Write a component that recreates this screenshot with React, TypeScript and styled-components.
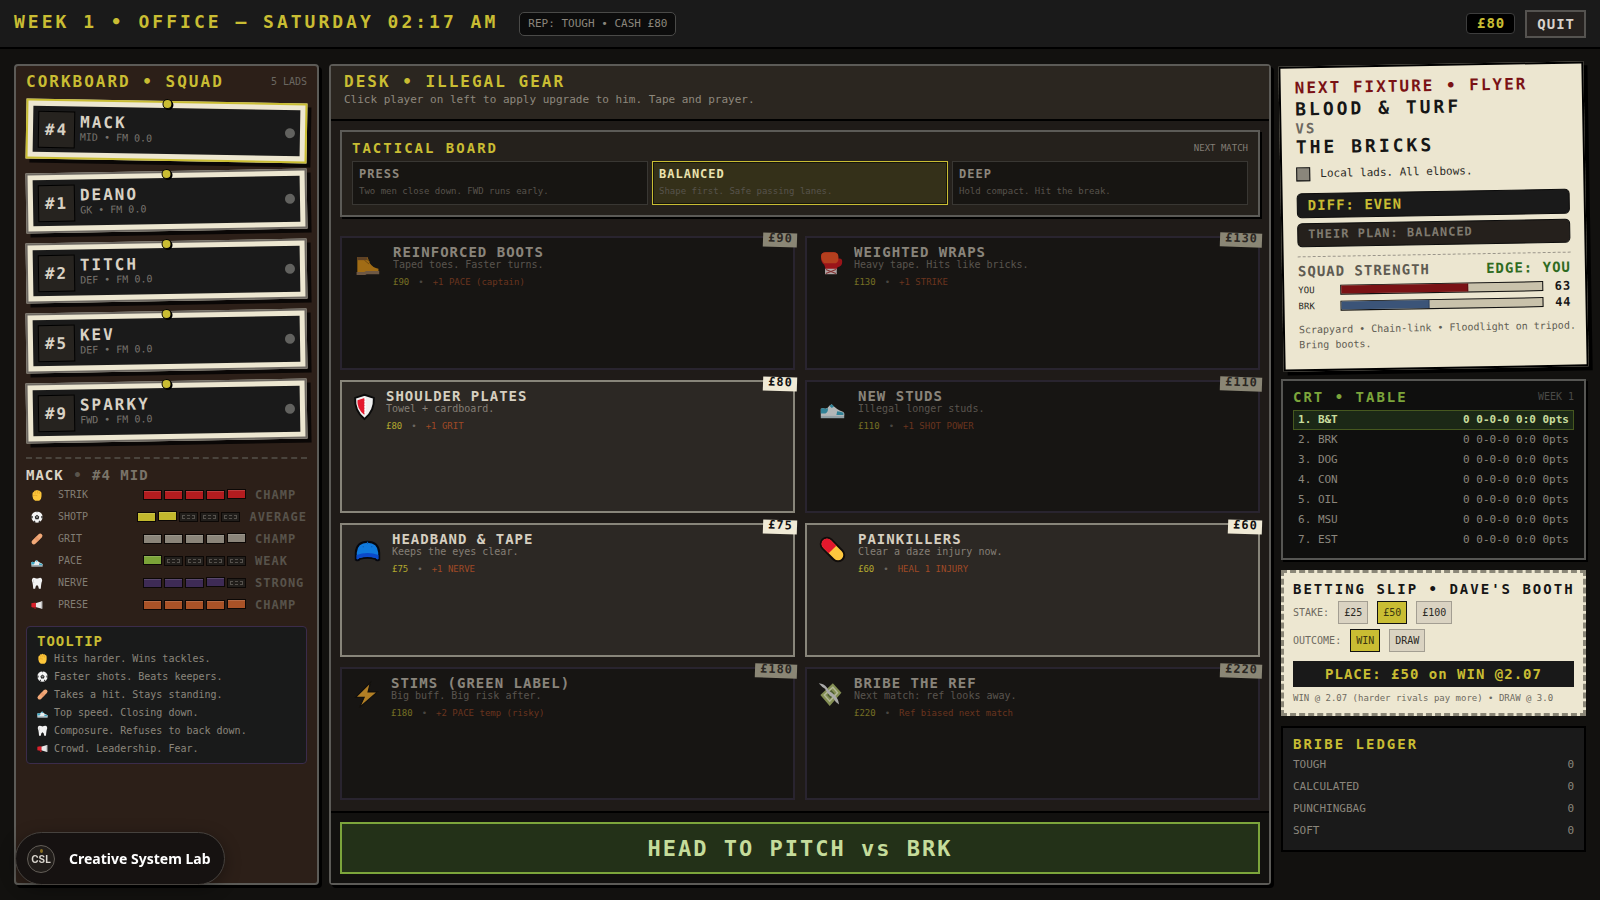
import React, { useState } from 'react';
import styled, { createGlobalStyle, css } from 'styled-components';

const mono = `'DejaVu Sans Mono', 'Liberation Mono', monospace`;

const color = {
  yellow: '#c9bd33',
  cream: '#ede7d1',
  ink: '#161616',
  coal: '#1a1a1a',
  steel: '#5c5b57',
  ash: '#8b867c',
  dim: '#6b6761',
  red: '#7a1215',
  blue: '#3b5478',
  green: '#7ca53b',
  rust: '#a04a26',
};

const GlobalStyle = createGlobalStyle`
  *, *::before, *::after { box-sizing: border-box; }
  body { margin: 0; background: #12110f; color: ${color.ash}; font-family: ${mono}; font-size: 10px; }
  button { font: inherit; color: inherit; padding: 0; margin: 0; border: 0; border-radius: 0; cursor: pointer; text-align: left; }
  button:disabled { cursor: default; }
  h1, h2, h3, p, ul, dl, dd { margin: 0; padding: 0; font-weight: inherit; }
  ul { list-style: none; }
  svg { display: block; flex: none; }
`;

/* Display type: chunky bold capitals with open tracking */
type Size = 'xs' | 'sm' | 'md' | 'lg' | 'xl' | 'xxl';
const scale: Record<Size, [number, number]> = {
  xs: [12, 1],
  sm: [14, 1],
  md: [14, 2],
  lg: [16, 2],
  xl: [18, 3],
  xxl: [22, 2],
};
const display = (s: Size) => css`
  font-family: ${mono};
  font-weight: 700;
  font-size: ${scale[s][0]}px;
  letter-spacing: ${scale[s][1]}px;
  white-space: nowrap;
`;

const Display = styled.span<{ $size: Size; $color?: string; $line?: number }>`
  ${(p) => display(p.$size)}
  display: block;
  color: ${(p) => p.$color ?? 'inherit'};
  line-height: ${(p) => p.$line ?? 16}px;
`;

const Small = styled.span<{ $size?: number; $color?: string; $line?: number }>`
  display: block;
  font-size: ${(p) => p.$size ?? 10}px;
  color: ${(p) => p.$color ?? color.dim};
  line-height: ${(p) => p.$line ?? 12}px;
  white-space: nowrap;
`;

const Between = styled.div`
  display: flex;
  align-items: center;
  justify-content: space-between;
`;

/* ---------- Page frame ---------- */
const Page = styled.div`
  min-height: 100vh;
  display: flex;
  flex-direction: column;
`;

const TopBar = styled.header`
  display: flex;
  align-items: center;
  height: 49px;
  padding: 0 14px;
  background: #1a1a1a;
  border-bottom: 2px solid #000;
`;
const BarTitle = styled.h1`
  ${display('xl')}
  color: ${color.yellow};
  line-height: 20px;
  margin-bottom: 3px;
`;
const RepChip = styled.span`
  margin-left: 21px;
  padding: 0 8px;
  border: 1px solid #4a4a48;
  border-radius: 5px;
  background: #0c0c0c;
  font-size: 11px;
  line-height: 22px;
  white-space: nowrap;
`;
const CashChip = styled.span`
  ${display('sm')}
  margin-left: auto;
  margin-right: 10px;
  padding: 0 9px 0 10px;
  border: 1px solid #3d3d3d;
  border-radius: 4px;
  background: #000;
  color: ${color.yellow};
  line-height: 19px;
`;
const QuitButton = styled.button`
  ${display('sm')}
  height: 28px;
  padding: 0 9px 0 10px;
  border: 2px solid #555350;
  background: #25211f;
  color: #d8d1cb;
`;

const Columns = styled.main`
  flex: 1;
  display: grid;
  grid-template-columns: 305px minmax(0, 1fr) 305px;
  gap: 10px;
  padding: 15px 14px;
`;

/* ---------- Squad ---------- */
const Corkboard = styled.section`
  display: flex;
  flex-direction: column;
  padding: 8px 10px 10px;
  border: 2px solid ${color.steel};
  border-radius: 4px;
  background: #2c1f18;
  box-shadow: 3px 3px 0 #000;
`;

const PlayerList = styled.ul`
  display: flex;
  flex-direction: column;
  gap: 10px;
  margin-top: 11px;
`;
const PlayerCard = styled.button<{ $active: boolean }>`
  position: relative;
  display: flex;
  align-items: center;
  width: 100%;
  height: 60px;
  padding: 4px 5px;
  border: 7px solid ${color.cream};
  outline: 2px solid ${(p) => (p.$active ? color.yellow : '#6d6862')};
  outline-offset: -2px;
  background: ${color.coal};
  box-shadow: 4px 4px 0 #0a0706;
  transform: rotate(${(p) => (p.$active ? 1 : -1)}deg);
`;
const Pin = styled.i`
  position: absolute;
  left: 50%;
  top: -9px;
  width: 10px;
  height: 10px;
  margin-left: -5px;
  border: 1px solid #000;
  border-radius: 50%;
  background: ${color.yellow};
  box-shadow: 1px 1px 0 #000;
`;
const ShirtNumber = styled.span`
  ${display('lg')}
  width: 37px;
  height: 37px;
  border: 1px solid #000;
  background: #26231f;
  color: #d8d1c4;
  line-height: 36px;
  text-align: center;
`;
const PlayerText = styled.span`
  flex: 1;
  padding: 0 0 2px 5px;
`;
const StatusDot = styled.i`
  width: 10px;
  height: 10px;
  border-radius: 50%;
  background: #62625f;
`;

const PlayerDetail = styled.div`
  margin-top: 16px;
  padding-top: 8px;
  border-top: 2px dashed #4a443d;
`;
const Row = styled.div`
  display: flex;
  align-items: center;
`;
const StatRow = styled.li`
  display: flex;
  align-items: center;
  height: 22px;
  padding-left: 5px;
`;
const StatList = styled.ul`
  margin-top: 1px;
`;
const StatIcon = styled.span`
  width: 14px;
  margin-right: 13px;
`;
const Bars = styled.span`
  display: flex;
  gap: 2px;
  margin-left: auto;
  margin-right: 9px;
`;
const Bar = styled.i<{ $fill?: string; $raised?: boolean }>`
  width: 19px;
  height: 10px;
  border: 1px solid #0c0806;
  ${(p) =>
    p.$fill
      ? css`
          background: ${p.$fill};
          box-shadow: inset 0 1px 0 rgba(255, 255, 255, 0.14);
        `
      : css`
          padding: 2px;
          background: #211e1b;
          &::before {
            content: '';
            display: block;
            height: 4px;
            border: 1px dashed #55514c;
          }
        `}
  transform: ${(p) => (p.$raised ? 'translateY(-1px)' : 'none')};
`;
const Rating = styled.span`
  ${display('xs')}
  min-width: 52px;
  color: #58534b;
  line-height: 14px;
`;

const TooltipBox = styled.aside`
  margin-top: 10px;
  padding: 6px 10px;
  border: 1px solid #3b2c4b;
  border-radius: 4px;
  background: #191a1a;
`;
const TooltipLine = styled.li`
  display: flex;
  align-items: center;
  gap: 6px;
  height: 18px;
  color: ${color.ash};
  white-space: nowrap;
`;

/* ---------- Desk ---------- */
const Desk = styled.section`
  display: flex;
  flex-direction: column;
  border: 2px solid ${color.steel};
  border-radius: 4px;
  background: #1f1b18;
  box-shadow: 3px 3px 0 #000;
`;
const DeskHeader = styled.header`
  height: 55px;
  padding: 8px 13px;
  background: #2b2620;
  border-bottom: 2px solid #000;
`;
const DeskBody = styled.div`
  flex: 1;
  display: flex;
  flex-direction: column;
  gap: 19px;
  padding: 9px 9px 11px;
`;
const Tactics = styled.section`
  padding: 8px 10px 10px;
  border: 2px solid ${color.steel};
  background: #25211c;
  box-shadow: 2px 2px 0 #000;
`;
const TacticGrid = styled.div`
  display: grid;
  grid-template-columns: repeat(3, minmax(0, 1fr));
  gap: 4px;
  margin-top: 5px;
`;
const Tactic = styled.button<{ $on: boolean }>`
  height: 44px;
  padding: 0 6px 1px;
  border: 1px solid ${(p) => (p.$on ? color.yellow : '#393733')};
  outline: ${(p) => (p.$on ? '1px solid #14140a' : 'none')};
  outline-offset: -2px;
  background: ${(p) => (p.$on ? '#343019' : '#171512')};
`;
const GearGrid = styled.div`
  flex: 1;
  display: grid;
  grid-template-columns: repeat(2, minmax(0, 1fr));
  grid-auto-rows: minmax(110px, 1fr);
  gap: 10px;
`;
const GearCard = styled.button`
  position: relative;
  display: flex;
  align-items: flex-start;
  gap: 12px;
  padding: 7px 12px;
  border: 2px solid #88857a;
  background: #2c2824;
  &:disabled {
    border-color: #29242f;
    background: #171513;
  }
`;
const GearArt = styled.span<{ $w: number; $off: boolean }>`
  display: flex;
  justify-content: center;
  width: ${(p) => p.$w}px;
  margin-top: 5px;
  opacity: ${(p) => (p.$off ? 0.75 : 1)};
`;
const GearText = styled.span<{ $off: boolean }>`
  display: block;
  opacity: ${(p) => (p.$off ? 0.6 : 1)};
`;
const GearMeta = styled.span`
  display: flex;
  gap: 9px;
  margin-top: 5px;
`;
const PriceTag = styled.span<{ $off: boolean }>`
  ${display('xs')}
  position: absolute;
  top: -5px;
  right: -4px;
  height: 14px;
  padding: 0 4px 0 5px;
  background: ${(p) => (p.$off ? '#8a8675' : '#f0ead6')};
  color: ${(p) => (p.$off ? '#2a2723' : '#111')};
  line-height: 11px;
  transform: rotate(2deg);
`;
const DeskFooter = styled.footer`
  padding: 9px;
  border-top: 2px solid #000;
  background: #12110f;
`;
const PitchButton = styled.button`
  ${display('xxl')}
  width: 100%;
  height: 52px;
  border: 2px solid ${color.green};
  background: #233118;
  color: #c5dc9b;
  text-align: center;
`;

/* ---------- Right column ---------- */
const Side = styled.div`
  display: flex;
  flex-direction: column;
  gap: 10px;
`;
const Flyer = styled.section`
  padding: 10px 14px 17px;
  border: 2px solid #000;
  background: #ece6d0;
  box-shadow: 4px 4px 0 #000;
  color: ${color.ink};
  transform: rotate(-1deg);
`;
const Kit = styled.div`
  display: flex;
  align-items: center;
  gap: 10px;
  height: 16px;
  margin: 9px 0 11px;
`;
const Swatch = styled.i`
  width: 14px;
  height: 14px;
  border: 1px solid #111;
  background: #8a867b;
`;
const Plate = styled.div<{ $muted?: boolean }>`
  ${(p) => display(p.$muted ? 'xs' : 'sm')}
  height: ${(p) => (p.$muted ? 24 : 25)}px;
  margin-top: ${(p) => (p.$muted ? 5 : 0)}px;
  padding-left: 10px;
  border: 1px solid #0c0c0c;
  border-radius: 5px;
  background: ${(p) => (p.$muted ? '#25201c' : '#1a1a1a')};
  color: ${(p) => (p.$muted ? '#7f7a6f' : color.yellow)};
  line-height: ${(p) => (p.$muted ? 21 : 23)}px;
`;
const Strength = styled.div`
  margin-top: 9px;
  padding-top: 6px;
  border-top: 1px dashed #9a958a;
`;
const StrengthList = styled.div`
  margin-top: 3px;
`;
const StrengthRow = styled.div`
  display: grid;
  grid-template-columns: 42px 1fr 28px;
  align-items: center;
  height: 16px;
`;
const Track = styled.div`
  height: 10px;
  border: 1px solid #111;
  background: #c9c2ab;
`;
const Fill = styled.div<{ $color: string }>`
  height: 100%;
  background: ${(p) => p.$color};
  border-right: 1px solid rgba(0, 0, 0, 0.25);
`;
const Score = styled.span`
  ${display('xs')}
  line-height: 14px;
  text-align: right;
`;
const Venue = styled.p`
  margin-top: 8px;
  color: #615d53;
  line-height: 15px;
  white-space: nowrap;
`;

const Crt = styled.section`
  padding: 8px 10px;
  border: 2px solid #565653;
  background: #0f0f0e;
  box-shadow: 2px 2px 0 #000;
`;
const League = styled.table`
  width: 100%;
  margin-top: 5px;
  border-collapse: collapse;
  font-size: 11px;
  td {
    height: 20px;
    padding: 0 5px;
    line-height: 18px;
    white-space: nowrap;
  }
  td:last-child {
    text-align: right;
  }
`;
const LeagueRow = styled.tr<{ $own: boolean }>`
  ${(p) =>
    p.$own &&
    css`
      background: #1b2816;
      color: #c9dd9d;
      font-weight: 700;
      outline: 1px solid #46581f;
      outline-offset: -1px;
    `}
`;

const Slip = styled.section`
  padding: 8px 9px 9px;
  border: 3px dashed #8a8677;
  background: ${color.cream};
  color: ${color.ink};
`;
const SlipRow = styled.div`
  display: flex;
  align-items: center;
  gap: 9px;
  height: 23px;
  margin-top: 5px;
  &:first-of-type {
    margin-top: 4px;
  }
`;
const Choice = styled.button<{ $on: boolean }>`
  height: 23px;
  padding: 0 5px;
  border: 1px solid ${(p) => (p.$on ? '#111' : '#a39e92')};
  background: ${(p) => (p.$on ? color.yellow : '#dad3c2')};
  color: ${(p) => (p.$on ? '#3a3610' : '#2b2924')};
  line-height: 21px;
`;
const PlaceButton = styled.button`
  ${display('sm')}
  width: 100%;
  height: 26px;
  margin: 9px 0 5px;
  background: #191919;
  color: ${color.yellow};
  text-align: center;
`;

const Ledger = styled.section`
  padding: 8px 10px;
  border: 2px solid #000;
  background: ${color.coal};
`;
const LedgerList = styled.dl`
  && {
    margin-top: 2px;
  }
`;
const LedgerRow = styled.div`
  display: flex;
  justify-content: space-between;
  font-size: 11px;
  line-height: 22px;
`;

/* ---------- Brand pill ---------- */
const Brand = styled.a`
  position: fixed;
  left: 15px;
  bottom: 15px;
  display: flex;
  align-items: center;
  gap: 14px;
  height: 53px;
  padding: 0 14px 0 11px;
  border: 1px solid #46423e;
  border-radius: 27px;
  background: #161211;
  box-shadow: 0 4px 16px rgba(0, 0, 0, 0.35);
  color: #fff;
  font: 700 14px 'Noto Sans', 'Open Sans', sans-serif;
  text-decoration: none;
  white-space: nowrap;
`;
const Seal = styled.span`
  position: relative;
  display: grid;
  place-items: center;
  width: 28px;
  height: 28px;
  border: 1px solid #625d57;
  border-radius: 50%;
  background: #211d1a;
  color: #d9d5cd;
  font: 700 10px Inter, sans-serif;
  &::before {
    content: '';
    position: absolute;
    top: 3px;
    width: 3px;
    height: 4px;
    border-radius: 50%;
    background: #8a6f22;
  }
`;

/* ---------- Icons ---------- */
type IconName =
  | 'fist' | 'ball' | 'bandage' | 'shoe' | 'tooth' | 'horn'
  | 'boot' | 'glove' | 'shield' | 'cap' | 'pill' | 'bolt' | 'money';

const shapes: Record<IconName, React.ReactNode> = {
  fist: (
    <>
      <path d="M4 12q0-4 4-5 1-4 5-3 3-3 6 0 4-1 5 2 4 1 4 5v8q0 9-6 12H11q-7-4-7-12z" fill="#fdc63a" />
      <path d="M11 6v7M17 5v7M22 7v6M5 18q6-3 12 0" stroke="#d9941f" strokeWidth="1.500" fill="none" />
    </>
  ),
  ball: (
    <>
      <circle cx="16" cy="16" r="15" fill="#f5f5f5" />
      <path d="M16 10l6 5-2 7h-8l-2-7zM13 1h6l-3 3zM1 13l4 1-1 5-3 1zM31 13l-4 1 1 5 3 1zM7 27l3-2 2 4-2 1zM25 27l-3-2-2 4 2 1z" fill="#222" />
      <circle cx="16" cy="16" r="3" fill="#8c8c8c" />
    </>
  ),
  bandage: (
    <>
      <rect x="-2" y="10" width="36" height="12" rx="6" fill="#f2a978" transform="rotate(-45 16 16)" />
      <rect x="12" y="10" width="8" height="12" fill="#e08c5d" opacity=".5" transform="rotate(-45 16 16)" />
    </>
  ),
  shoe: (
    <g transform="translate(0 3)">
      <path d="M1 16l3-1q4 3 8-3l3-2q5 6 15 10 2 2 1 5H1z" fill="#e8eef0" />
      <path d="M1 16l3-1q3 2 6 0 1 5-3 7H1zM15 10l-3 2 3 3 3-2zM22 19q4 0 8 2v3h-9z" fill="#3aa7c4" />
      <path d="M1 25h30v3H1z" fill="#b9cfd8" />
    </g>
  ),
  tooth: (
    <>
      <path d="M3 5q3-5 9-2 4 2 8 0 6-3 9 2 2 4-1 10-1 4-2 16h-5q-1-9-5-10-4 1-5 10H6Q5 19 4 15 1 9 3 5z" fill="#f2f2f2" />
      <path d="M7 7q-2 4 1 9" stroke="#c9c9c9" strokeWidth="2" fill="none" />
    </>
  ),
  horn: (
    <>
      <path d="M12 11L29 6v20L12 21z" fill="#e6e6e6" />
      <path d="M1 11q6-2 12-1v12q-6 1-12-1z" fill="#d9202b" />
      <path d="M8 22h5v4H9z" fill="#a8171f" />
      <path d="M29 6v20" stroke="#b8b8b8" strokeWidth="3" />
    </>
  ),
  boot: (
    <g transform="translate(0 3)">
      <path d="M3 6h13l3 8q4 6 11 7v5H3z" fill="#d08a16" />
      <path d="M3 6h13v4H3z" fill="#76502c" />
      <path d="M2 25h10l2-1h17v4H15l-2 1H2z" fill="#8b6f55" />
      <path d="M12 10l6 5M14 8l5 4" stroke="#8a5a12" strokeWidth="1.200" />
    </g>
  ),
  glove: (
    <>
      <path d="M4 8q0-5 6-5h10q6 0 6 6v2q5-1 5 4 0 6-6 7l-1 3H10L8 19Q3 15 4 8z" fill="#c8141c" />
      <path d="M4 8q0-5 6-5h10q6 0 6 6v4q-1 4-5 4H8q-4-3-4-9z" fill="#e84d22" />
      <path d="M9 24h15v7H9z" fill="#e3dada" />
      <path d="M10 25l13 5M23 25l-13 5" stroke="#a83a3a" strokeWidth="1.400" />
    </>
  ),
  shield: (
    <>
      <path d="M16 1L28 5q1 17-12 27Q3 22 4 5z" fill="#f0f0f0" stroke="#0b0b0b" strokeWidth="2.500" />
      <path d="M16 5v22Q6 19 7 8z" fill="#e3182d" />
      <path d="M17 5v22" stroke="#fff" strokeWidth="2" strokeDasharray="2 1.500" />
    </>
  ),
  cap: (
    <g transform="translate(0 2)">
      <path d="M1 27V18Q2 4 16 4t15 14v9q-3 2-5-1-10-3-20 0-2 3-5 1z" fill="#0f79dc" stroke="#06080f" strokeWidth="2.500" />
      <path d="M2 21q14-5 28 0v5q-2 1-4-1-10-3-20 0-2 2-4 1z" fill="#0b49c9" />
      <path d="M16 4v3M10 10l1 1M21 10l1 1" stroke="#0a5cb4" strokeWidth="1.500" />
    </g>
  ),
  pill: (
    <g transform="rotate(45 16 16)">
      <rect x="-2" y="8" width="36" height="16" rx="8" fill="#fdc73e" stroke="#100c0b" strokeWidth="2.500" />
      <path d="M16 9H6a7 7 0 0 0 0 14H16z" fill="#e3182d" />
    </g>
  ),
  bolt: (
    <g transform="translate(0 2)">
      <path d="M21 0L2 19h11L7 32l23-20H18z" fill="#e6a32b" stroke="#0f0d0b" strokeWidth="1.500" />
    </g>
  ),
  money: (
    <>
      <path d="M3 18L19 3l11 12-15 17z" fill="#a9b86a" />
      <path d="M8 18L19 8l6 7-10 11z" fill="none" stroke="#e7edc4" strokeWidth="1.800" />
      <path d="M13 18l4-5 3 3-4 5z" fill="none" stroke="#5c7138" strokeWidth="1.800" />
      <path d="M1 3q7 1 10 5 3 6 9 9 6 5 7 13-5-3-8-9-7-4-10-11Q5 8 1 3z" fill="#dcdcdc" />
    </>
  ),
};

function Icon({ name, size }: { name: IconName; size: number }) {
  return (
    <svg width={size} height={size} viewBox="0 0 32 32" overflow="visible" aria-hidden="true">
      {shapes[name]}
    </svg>
  );
}

/* ---------- Data ---------- */
const squad = [
  { no: 4, name: 'MACK', role: 'MID' },
  { no: 1, name: 'DEANO', role: 'GK' },
  { no: 2, name: 'TITCH', role: 'DEF' },
  { no: 5, name: 'KEV', role: 'DEF' },
  { no: 9, name: 'SPARKY', role: 'FWD' },
];

const stats: { icon: IconName; label: string; value: number; fill: string; rating: string }[] = [
  { icon: 'fist', label: 'STRIK', value: 5, fill: '#b31c1f', rating: 'CHAMP' },
  { icon: 'ball', label: 'SHOTP', value: 2, fill: '#c2b82d', rating: 'AVERAGE' },
  { icon: 'bandage', label: 'GRIT', value: 5, fill: '#8b857a', rating: 'CHAMP' },
  { icon: 'shoe', label: 'PACE', value: 1, fill: '#7ba338', rating: 'WEAK' },
  { icon: 'tooth', label: 'NERVE', value: 4, fill: '#3e2b55', rating: 'STRONG' },
  { icon: 'horn', label: 'PRESE', value: 5, fill: '#a95227', rating: 'CHAMP' },
];

const tips: { icon: IconName; text: string }[] = [
  { icon: 'fist', text: 'Hits harder. Wins tackles.' },
  { icon: 'ball', text: 'Faster shots. Beats keepers.' },
  { icon: 'bandage', text: 'Takes a hit. Stays standing.' },
  { icon: 'shoe', text: 'Top speed. Closing down.' },
  { icon: 'tooth', text: 'Composure. Refuses to back down.' },
  { icon: 'horn', text: 'Crowd. Leadership. Fear.' },
];

const tactics = [
  { name: 'PRESS', text: 'Two men close down. FWD runs early.' },
  { name: 'BALANCED', text: 'Shape first. Safe passing lanes.' },
  { name: 'DEEP', text: 'Hold compact. Hit the break.' },
];

const cash = 80;
const gear: { icon: IconName; w: number; name: string; text: string; price: number; effect: string }[] = [
  { icon: 'boot', w: 27, name: 'REINFORCED BOOTS', text: 'Taped toes. Faster turns.', price: 90, effect: '+1 PACE (captain)' },
  { icon: 'glove', w: 23, name: 'WEIGHTED WRAPS', text: 'Heavy tape. Hits like bricks.', price: 130, effect: '+1 STRIKE' },
  { icon: 'shield', w: 20, name: 'SHOULDER PLATES', text: 'Towel + cardboard.', price: 80, effect: '+1 GRIT' },
  { icon: 'shoe', w: 27, name: 'NEW STUDS', text: 'Illegal longer studs.', price: 110, effect: '+1 SHOT POWER' },
  { icon: 'cap', w: 26, name: 'HEADBAND & TAPE', text: 'Keeps the eyes clear.', price: 75, effect: '+1 NERVE' },
  { icon: 'pill', w: 27, name: 'PAINKILLERS', text: 'Clear a daze injury now.', price: 60, effect: 'HEAL 1 INJURY' },
  { icon: 'bolt', w: 25, name: 'STIMS (GREEN LABEL)', text: 'Big buff. Big risk after.', price: 180, effect: '+2 PACE temp (risky)' },
  { icon: 'money', w: 23, name: 'BRIBE THE REF', text: 'Next match: ref looks away.', price: 220, effect: 'Ref biased next match' },
];

const league = ['B&T', 'BRK', 'DOG', 'CON', 'OIL', 'MSU', 'EST'];
const ledger = ['TOUGH', 'CALCULATED', 'PUNCHINGBAG', 'SOFT'];
const stakes = [25, 50, 100];
const outcomes = ['WIN', 'DRAW'];

/* ---------- Sections ---------- */
function SquadPanel() {
  const [picked, setPicked] = useState(4);
  const player = squad.find((p) => p.no === picked)!;
  return (
    <Corkboard>
      <Between>
        <Display as="h2" $size="lg" $color={color.yellow}>CORKBOARD • SQUAD</Display>
        <Small>5 LADS</Small>
      </Between>
      <PlayerList>
        {squad.map((p) => (
          <li key={p.no}>
            <PlayerCard $active={p.no === picked} aria-pressed={p.no === picked} onClick={() => setPicked(p.no)}>
              <Pin />
              <ShirtNumber>#{p.no}</ShirtNumber>
              <PlayerText>
                <Display $size="lg" $line={17} $color="#d8d1c4">{p.name}</Display>
                <Small $line={14} $color="#77736d">{p.role} • FM 0.0</Small>
              </PlayerText>
              <StatusDot />
            </PlayerCard>
          </li>
        ))}
      </PlayerList>
      <PlayerDetail>
        <Row>
          <Display as="h3" $size="sm" $color="#dcd4c6">{player.name}&nbsp;</Display>
          <Display $size="sm" $color="#5a544c">•&nbsp;</Display>
          <Display $size="sm" $color="#7a746a">#{player.no} {player.role}</Display>
        </Row>
        <StatList>
          {stats.map((s) => (
            <StatRow key={s.label}>
              <StatIcon><Icon name={s.icon} size={12} /></StatIcon>
              <Small $color="#827d74">{s.label}</Small>
              <Bars>
                {[1, 2, 3, 4, 5].map((n) => (
                  <Bar key={n} $fill={n <= s.value ? s.fill : undefined} $raised={n === s.value} />
                ))}
              </Bars>
              <Rating>{s.rating}</Rating>
            </StatRow>
          ))}
        </StatList>
      </PlayerDetail>
      <TooltipBox>
        <Display as="h3" $size="sm" $color={color.yellow}>TOOLTIP</Display>
        <ul>
          {tips.map((t) => (
            <TooltipLine key={t.text}><Icon name={t.icon} size={11} />{t.text}</TooltipLine>
          ))}
        </ul>
      </TooltipBox>
    </Corkboard>
  );
}

function DeskPanel() {
  const [tactic, setTactic] = useState('BALANCED');
  return (
    <Desk>
      <DeskHeader>
        <Display as="h2" $size="lg" $color={color.yellow}>DESK • ILLEGAL GEAR</Display>
        <Small as="p" $size={11} $color="#8e887d" $line={19}>
          Click player on left to apply upgrade to him. Tape and prayer.
        </Small>
      </DeskHeader>
      <DeskBody>
        <Tactics>
          <Between>
            <Display as="h3" $size="md" $color={color.yellow}>TACTICAL BOARD</Display>
            <Small $size={9} $color="#837e75">NEXT MATCH</Small>
          </Between>
          <TacticGrid>
            {tactics.map((t) => (
              <Tactic key={t.name} $on={t.name === tactic} aria-pressed={t.name === tactic} onClick={() => setTactic(t.name)}>
                <Display $size="xs" $line={18} $color={t.name === tactic ? '#eae2ae' : '#8d877d'}>{t.name}</Display>
                <Small $size={9} $line={17} $color="#57534c">{t.text}</Small>
              </Tactic>
            ))}
          </TacticGrid>
        </Tactics>
        <GearGrid>
          {gear.map((g) => {
            const off = g.price > cash;
            return (
              <GearCard key={g.name} disabled={off}>
                <GearArt $w={g.w} $off={off}><Icon name={g.icon} size={25} /></GearArt>
                <GearText $off={off}>
                  <Display $size="sm" $line={14} $color="#d6cfc0">{g.name}</Display>
                  <Small $color="#857f76">{g.text}</Small>
                  <GearMeta>
                    <Small $size={9} $color="#b3a92f">£{g.price}</Small>
                    <Small $size={9}>•</Small>
                    <Small $size={9} $color={color.rust}>{g.effect}</Small>
                  </GearMeta>
                </GearText>
                <PriceTag $off={off}>£{g.price}</PriceTag>
              </GearCard>
            );
          })}
        </GearGrid>
      </DeskBody>
      <DeskFooter>
        <PitchButton>HEAD TO PITCH vs BRK</PitchButton>
      </DeskFooter>
    </Desk>
  );
}

function FixtureFlyer() {
  const teams = [
    { name: 'YOU', value: 63, fill: color.red },
    { name: 'BRK', value: 44, fill: color.blue },
  ];
  return (
    <Flyer>
      <Display as="h2" $size="lg" $line={20} $color={color.red}>NEXT FIXTURE • FLYER</Display>
      <Display $size="xl" $line={22}>BLOOD &amp; TURF</Display>
      <Display $size="md" $line={16} $color="#6c685f">VS</Display>
      <Display $size="xl" $line={21}>THE BRICKS</Display>
      <Kit>
        <Swatch />
        <Small $size={11} $color="#2b2a26">Local lads. All elbows.</Small>
      </Kit>
      <Plate>DIFF: EVEN</Plate>
      <Plate $muted>THEIR PLAN: BALANCED</Plate>
      <Strength>
        <Between>
          <Display $size="sm" $color="#5f5b52">SQUAD STRENGTH</Display>
          <Display $size="sm" $color="#2f6b1f">EDGE: YOU</Display>
        </Between>
        <StrengthList>
          {teams.map((t) => (
            <StrengthRow key={t.name}>
              <Small $size={9} $color="#2b2a26">{t.name}</Small>
              <Track><Fill $color={t.fill} style={{ width: `${t.value}%` }} /></Track>
              <Score>{t.value}</Score>
            </StrengthRow>
          ))}
        </StrengthList>
      </Strength>
      <Venue>Scrapyard • Chain-link • Floodlight on tripod.<br />Bring boots.</Venue>
    </Flyer>
  );
}

function BettingSlip() {
  const [stake, setStake] = useState(50);
  const [outcome, setOutcome] = useState('WIN');
  const odds = outcome === 'WIN' ? '2.07' : '3.0';
  return (
    <Slip>
      <Display as="h2" $size="md">BETTING SLIP • DAVE'S BOOTH</Display>
      <SlipRow role="group" aria-label="Stake">
        <Small $color="#6e6a5f">STAKE:</Small>
        {stakes.map((s) => (
          <Choice key={s} $on={s === stake} aria-pressed={s === stake} onClick={() => setStake(s)}>£{s}</Choice>
        ))}
      </SlipRow>
      <SlipRow role="group" aria-label="Outcome">
        <Small $color="#6e6a5f">OUTCOME:</Small>
        {outcomes.map((o) => (
          <Choice key={o} $on={o === outcome} aria-pressed={o === outcome} onClick={() => setOutcome(o)}>{o}</Choice>
        ))}
      </SlipRow>
      <PlaceButton>PLACE: £{stake} on {outcome} @{odds}</PlaceButton>
      <Small as="p" $size={9} $color="#6e6a5f">WIN @ 2.07 (harder rivals pay more) • DRAW @ 3.0</Small>
    </Slip>
  );
}

export default function App() {
  return (
    <Page>
      <GlobalStyle />
      <TopBar>
        <BarTitle>WEEK 1 • OFFICE — SATURDAY 02:17 AM</BarTitle>
        <RepChip>REP: TOUGH • CASH £{cash}</RepChip>
        <CashChip>£{cash}</CashChip>
        <QuitButton>QUIT</QuitButton>
      </TopBar>
      <Columns>
        <SquadPanel />
        <DeskPanel />
        <Side>
          <FixtureFlyer />
          <Crt>
            <Between>
              <Display as="h2" $size="md" $color={color.green}>CRT • TABLE</Display>
              <Small $color="#4a4a47">WEEK 1</Small>
            </Between>
            <League>
              <tbody>
                {league.map((team, i) => (
                  <LeagueRow key={team} $own={i === 0}>
                    <td>{i + 1}. {team}</td>
                    <td>0 0-0-0 0:0 0pts</td>
                  </LeagueRow>
                ))}
              </tbody>
            </League>
          </Crt>
          <BettingSlip />
          <Ledger>
            <Display as="h2" $size="md" $color={color.yellow}>BRIBE LEDGER</Display>
            <LedgerList>
              {ledger.map((name) => (
                <LedgerRow key={name}><dt>{name}</dt><dd>0</dd></LedgerRow>
              ))}
            </LedgerList>
          </Ledger>
        </Side>
      </Columns>
      <Brand href="#">
        <Seal>CSL</Seal>
        Creative System Lab
      </Brand>
    </Page>
  );
}
